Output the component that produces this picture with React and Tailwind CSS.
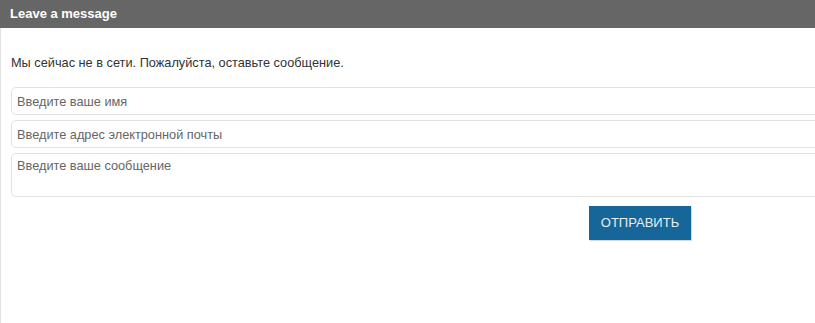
export default function App() {
  return (
    <div className="w-[815px] h-[323px] overflow-hidden bg-white font-['Liberation_Sans',Arial,sans-serif]">
      <div className="h-[28px] bg-[#666666] flex items-center pl-[10px]">
        <span className="text-white font-bold text-[13px]">Leave a message</span>
      </div>
      <div className="h-[295px] border-l border-[#e2e2e2] pl-[10px] pt-[27px]">
        <p className="text-[12.75px] text-[#333333] leading-[16px]">
          Мы сейчас не в сети. Пожалуйста, оставьте сообщение.
        </p>
        <div className="mt-[16px] flex flex-col gap-[5px] w-[830px]">
          <input
            className="h-[28px] border border-[#e2e2e2] rounded-[5px] px-[5px] text-[12.75px] text-[#333] placeholder:text-[#666666] outline-none"
            placeholder="Введите ваше имя"
          />
          <input
            className="h-[28px] border border-[#e2e2e2] rounded-[5px] px-[5px] text-[12.75px] text-[#333] placeholder:text-[#666666] outline-none"
            placeholder="Введите адрес электронной почты"
          />
          <textarea
            className="h-[44px] resize-none border border-[#e2e2e2] rounded-[5px] px-[5px] pt-[4px] text-[12.75px] leading-[16px] text-[#333] placeholder:text-[#666666] outline-none"
            placeholder="Введите ваше сообщение"
          />
        </div>
        <button className="block mt-[9px] ml-[578px] w-[102px] h-[34px] bg-[#166699] text-[#e8eef4] text-[13px] shadow-[1px_1px_1px_rgba(0,0,0,0.15)]">
          ОТПРАВИТЬ
        </button>
      </div>
    </div>
  );
}
